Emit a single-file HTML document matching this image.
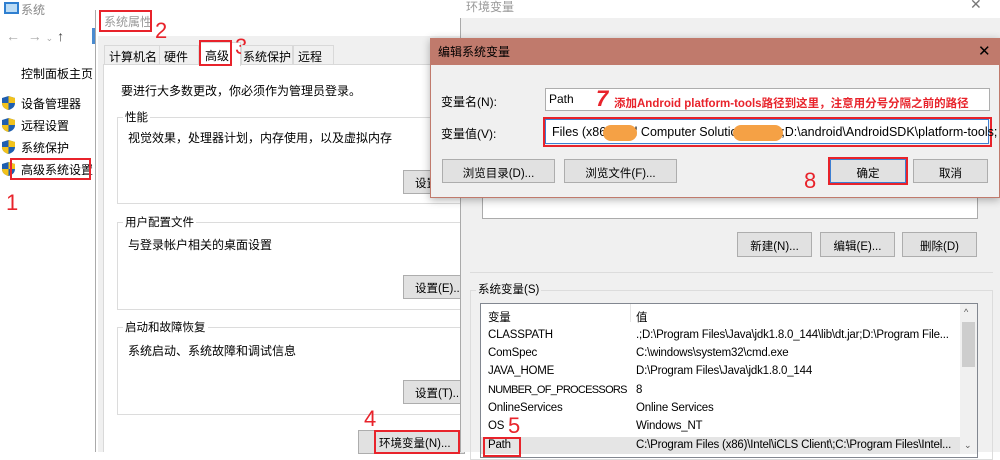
<!DOCTYPE html>
<html><head><meta charset="utf-8"><style>
*{margin:0;padding:0;box-sizing:border-box}
body{width:1000px;height:452px;overflow:hidden;background:#fff;position:relative;font-family:"Liberation Sans","Noto Sans CJK SC",sans-serif;font-size:12px;color:#000}
.a{position:absolute;white-space:nowrap}
.btn{position:absolute;background:#e1e1e1;border:1px solid #adadad;text-align:center;font-size:11.5px}
.red{position:absolute;border:2px solid #e8232b}
.num{position:absolute;color:#e8232b;font-size:22px;line-height:22px;font-family:"Liberation Sans",sans-serif}
.grp{position:absolute;border:1px solid #dcdcdc}
.gl{position:absolute;background:#fff;padding:0 2px;font-size:11.5px}
.sh{position:absolute;width:13px;height:14px}
.l{font-size:11.5px;letter-spacing:-0.2px}
</style></head><body>
<div class="a" style="left:4px;top:2px;width:15px;height:12px;border:2px solid #2f7fd0;background:#bcdcf5"></div>
<div class="a" style="left:21px;top:1px;color:#888">系统</div>
<div class="a" style="left:6px;top:28px;color:#aaa;font-size:14px">←&nbsp;&nbsp;→&nbsp;<span style="font-size:9px">⌄</span>&nbsp;<span style="color:#444">↑</span></div>
<div class="a" style="left:92px;top:28px;width:6px;height:16px;background:#4a8bd0"></div>
<div class="a" style="left:21px;top:65px">控制面板主页</div>
<svg class="sh" style="left:2px;top:96px" viewBox="0 0 13 14"><path d="M6.5 0L13 2v5c0 4-3 6-6.5 7C3 13 0 11 0 7V2z" fill="#1f5fb0"/><path d="M6.5 0L13 2v5H6.5zM0 7h6.5v7C3 13 0 11 0 7z" fill="#f2c21c"/></svg>
<div class="a" style="left:21px;top:95px">设备管理器</div>
<svg class="sh" style="left:2px;top:118px" viewBox="0 0 13 14"><path d="M6.5 0L13 2v5c0 4-3 6-6.5 7C3 13 0 11 0 7V2z" fill="#1f5fb0"/><path d="M6.5 0L13 2v5H6.5zM0 7h6.5v7C3 13 0 11 0 7z" fill="#f2c21c"/></svg>
<div class="a" style="left:21px;top:117px">远程设置</div>
<svg class="sh" style="left:2px;top:140px" viewBox="0 0 13 14"><path d="M6.5 0L13 2v5c0 4-3 6-6.5 7C3 13 0 11 0 7V2z" fill="#1f5fb0"/><path d="M6.5 0L13 2v5H6.5zM0 7h6.5v7C3 13 0 11 0 7z" fill="#f2c21c"/></svg>
<div class="a" style="left:21px;top:139px">系统保护</div>
<svg class="sh" style="left:2px;top:162px" viewBox="0 0 13 14"><path d="M6.5 0L13 2v5c0 4-3 6-6.5 7C3 13 0 11 0 7V2z" fill="#1f5fb0"/><path d="M6.5 0L13 2v5H6.5zM0 7h6.5v7C3 13 0 11 0 7z" fill="#f2c21c"/></svg>
<div class="a" style="left:21px;top:161px">高级系统设置</div>
<div class="red" style="left:10px;top:158px;width:81px;height:22px"></div>
<div class="num" style="left:6px;top:192px">1</div>

<div class="a" style="left:95px;top:10px;width:370px;height:442px;background:#fff;border-left:1px solid #aaa"></div>
<div class="a" style="left:98px;top:36px;width:367px;height:416px;background:#f0f0f0"></div>
<div class="a" style="left:104px;top:13px;color:#999">系统属性</div>
<div class="red" style="left:99px;top:10px;width:53px;height:22px"></div>
<div class="num" style="left:155px;top:20px">2</div>
<div class="a" style="left:103px;top:64px;width:362px;height:388px;background:#fff;border-top:1px solid #d9d9d9;border-left:1px solid #d9d9d9"></div>
<div class="a" style="left:104px;top:45px;width:56px;height:20px;background:#f0f0f0;border:1px solid #d9d9d9;padding:2px 0 0 4px">计算机名</div>
<div class="a" style="left:159px;top:45px;width:40px;height:20px;background:#f0f0f0;border:1px solid #d9d9d9;padding:2px 0 0 4px">硬件</div>
<div class="a" style="left:199px;top:42px;width:42px;height:24px;background:#fff;border:1px solid #d9d9d9;border-bottom:none;padding:4px 0 0 5px">高级</div>
<div class="red" style="left:199px;top:40px;width:33px;height:26px"></div>
<div class="num" style="left:235px;top:36px">3</div>
<div class="a" style="left:241px;top:45px;width:52px;height:20px;background:#f0f0f0;border:1px solid #d9d9d9;padding:2px 0 0 1px">系统保护</div>
<div class="a" style="left:293px;top:45px;width:41px;height:20px;background:#f0f0f0;border:1px solid #d9d9d9;padding:2px 0 0 4px">远程</div>
<div class="a" style="left:121px;top:82px">要进行大多数更改，你必须作为管理员登录。</div>
<div class="grp" style="left:117px;top:117px;width:360px;height:87px"></div>
<div class="gl" style="left:123px;top:109px">性能</div>
<div class="a" style="left:128px;top:129px">视觉效果，处理器计划，内存使用，以及虚拟内存</div>
<div class="btn" style="left:403px;top:170px;width:62px;height:24px;padding:4px 0 0 11px;text-align:left">设置(S)...</div>
<div class="grp" style="left:117px;top:222px;width:360px;height:88px"></div>
<div class="gl" style="left:123px;top:214px">用户配置文件</div>
<div class="a" style="left:128px;top:236px">与登录帐户相关的桌面设置</div>
<div class="btn" style="left:403px;top:275px;width:62px;height:24px;padding:4px 0 0 11px;text-align:left">设置(E)...</div>
<div class="grp" style="left:117px;top:327px;width:360px;height:88px"></div>
<div class="gl" style="left:123px;top:319px">启动和故障恢复</div>
<div class="a" style="left:128px;top:342px">系统启动、系统故障和调试信息</div>
<div class="btn" style="left:403px;top:380px;width:62px;height:24px;padding:4px 0 0 11px;text-align:left">设置(T)...</div>
<div class="btn" style="left:358px;top:430px;width:107px;height:24px;padding:4px 0 0 20px;text-align:left">环境变量(N)...</div>
<div class="red" style="left:374px;top:430px;width:86px;height:24px"></div>
<div class="num" style="left:364px;top:408px">4</div>

<div class="a" style="left:460px;top:0;width:540px;height:452px;background:#f0f0f0;border-left:1px solid #aaa"></div>
<div class="a" style="left:460px;top:0;width:540px;height:18px;background:#fff"></div>
<div class="a" style="left:466px;top:-2px;color:#999">环境变量</div>
<div class="a" style="left:970px;top:-4px;color:#777;font-size:14px">✕</div>
<div class="a" style="left:482px;top:195px;width:496px;height:24px;background:#fff;border:1px solid #ababab;border-top:none"></div>
<div class="btn" style="left:737px;top:232px;width:75px;height:25px;padding-top:5px">新建(N)...</div>
<div class="btn" style="left:820px;top:232px;width:75px;height:25px;padding-top:5px">编辑(E)...</div>
<div class="btn" style="left:902px;top:232px;width:75px;height:25px;padding-top:5px">删除(D)</div>
<div class="a" style="left:470px;top:272px;width:523px;height:1px;background:#dcdcdc"></div>
<div class="grp" style="left:470px;top:290px;width:523px;height:170px"></div>
<div class="gl" style="left:476px;top:281px;background:#f0f0f0">系统变量(S)</div>
<div class="a" style="left:480px;top:303px;width:498px;height:155px;background:#fff;border:1px solid #828790"></div>
<div class="a" style="left:960px;top:304px;width:17px;height:150px;background:#f0f0f0"></div>
<div class="a" style="left:962px;top:322px;width:13px;height:45px;background:#cdcdcd"></div>
<div class="a" style="left:964px;top:307px;font-size:9px;color:#555">^</div>
<div class="a" style="left:964px;top:440px;font-size:9px;color:#555">⌄</div>
<div class="a" style="left:630px;top:304px;width:1px;height:18px;background:#e5e5e5"></div>
<div class="a" style="left:481px;top:437px;width:479px;height:17px;background:#e5e5e5"></div>
<div class="a l" style="left:488px;top:309px">变量</div><div class="a l" style="left:636px;top:309px">值</div>
<div class="a l" style="left:488px;top:329px">CLASSPATH</div><div class="a l" style="left:636px;top:329px">.;D:\Program Files\Java\jdk1.8.0_144\lib\dt.jar;D:\Program File...</div>
<div class="a l" style="left:488px;top:347px">ComSpec</div><div class="a l" style="left:636px;top:347px">C:\windows\system32\cmd.exe</div>
<div class="a l" style="left:488px;top:365px">JAVA_HOME</div><div class="a l" style="left:636px;top:365px">D:\Program Files\Java\jdk1.8.0_144</div>
<div class="a" style="left:488px;top:384px;font-size:11px;letter-spacing:-0.7px">NUMBER_OF_PROCESSORS</div><div class="a l" style="left:636px;top:384px">8</div>
<div class="a l" style="left:488px;top:402px">OnlineServices</div><div class="a l" style="left:636px;top:402px">Online Services</div>
<div class="a l" style="left:488px;top:420px">OS</div><div class="a l" style="left:636px;top:420px">Windows_NT</div>
<div class="a l" style="left:488px;top:439px">Path</div><div class="a l" style="left:636px;top:439px">C:\Program Files (x86)\Intel\iCLS Client\;C:\Program Files\Intel...</div>
<div class="red" style="left:483px;top:437px;width:38px;height:20px"></div>
<div class="num" style="left:508px;top:415px">5</div>

<div class="a" style="left:430px;top:38px;width:570px;height:160px;background:#f0f0f0;border:1px solid #c07a6c;box-shadow:0 2px 8px rgba(0,0,0,.3)"></div>
<div class="a" style="left:430px;top:38px;width:570px;height:27px;background:#c07a6c"></div>
<div class="a" style="left:438px;top:43px;font-size:12px">编辑系统变量</div>
<div class="a" style="left:978px;top:42px;font-size:15px">✕</div>
<div class="a" style="left:441px;top:93px">变量名(N):</div>
<div class="a" style="left:545px;top:88px;width:445px;height:23px;background:#fff;border:1px solid #adadad"></div>
<div class="a" style="left:549px;top:92px">Path</div>
<div class="a" style="left:596px;top:86px;color:#e8232b;font-size:22px;font-weight:bold;font-style:italic">7</div>
<div class="a" style="left:614px;top:95px;color:#e8232b;font-weight:bold;font-size:11.5px">添加Android platform-tools路径到这里，注意用分号分隔之前的路径</div>
<div class="a" style="left:441px;top:125px">变量值(V):</div>
<div class="a" style="left:545px;top:119px;width:444px;height:25px;background:#fff;border:1px solid #3c7fd2"></div>
<div class="red" style="left:543px;top:117px;width:449px;height:30px"></div>
<div class="a" style="left:552px;top:125px;font-size:12.5px">Files (x86)\Intel Computer Solutions\Intel\;D:\android\AndroidSDK\platform-tools;</div>
<div class="a" style="left:603px;top:125px;width:34px;height:16px;background:#f5a145;border-radius:8px"></div>
<div class="a" style="left:733px;top:125px;width:50px;height:16px;background:#f5a145;border-radius:8px"></div>
<div class="btn" style="left:442px;top:159px;width:113px;height:24px;padding-top:5px">浏览目录(D)...</div>
<div class="btn" style="left:564px;top:159px;width:113px;height:24px;padding-top:5px">浏览文件(F)...</div>
<div class="btn" style="left:830px;top:159px;width:76px;height:24px;padding-top:5px;border-color:#3c7fd2">确定</div>
<div class="red" style="left:828px;top:157px;width:80px;height:28px"></div>
<div class="btn" style="left:913px;top:159px;width:75px;height:24px;padding-top:5px">取消</div>
<div class="num" style="left:804px;top:170px">8</div>
</body></html>
